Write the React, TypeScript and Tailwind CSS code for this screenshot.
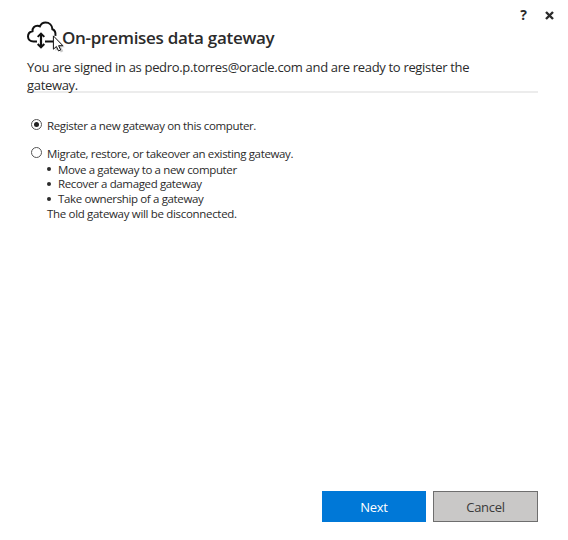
import React from "react";

function GatewayIcon() {
  return (
    <svg className="h-[32px] w-[38px] shrink-0" viewBox="0 0 38 32" fill="none">
      <g stroke="#111" strokeWidth="2">
        <path d="M10 20.500H6.600C3 20.500 1 18.300 1 15.600c0-2.800 2-4.800 4.500-5.300-.2-3.400 2-5.600 5-5.600 1 0 1.800.2 2.400.6C14 3 16.100 1.500 18.500 1.500c3.900 0 6.700 2.900 6.900 6.700 2.200.8 3.400 3.600 3 6.700" />
        <path d="M18 20.500H26" />
        <path d="M14 13v13" strokeWidth="2.200" />
        <path d="M10.700 15.900 14 12.600l3.300 3.300M10.700 23l3.300 3.300 3.300-3.300" />
      </g>
      <path d="M28.500 17v13l3-2.700 2.300 4.200 2.500-1.200-2.100-4.100h3.500z" fill="#777" opacity=".4" />
      <path
        d="M26.400 14.900v13.300l3-2.700 2.100 4.400 2.200-1-2.100-4.200h4.300z"
        fill="#fff"
        stroke="#111"
        strokeWidth="1"
      />
    </svg>
  );
}

function Option({ checked, label }: { checked?: boolean; label: string }) {
  return (
    <label className="flex h-[16px] items-center whitespace-nowrap">
      <span className="relative -top-px mr-[5px] flex h-[11px] w-[11px] items-center justify-center rounded-full border border-[#555] bg-white">
        {checked && <span className="h-[5px] w-[5px] rounded-full bg-[#222]" />}
      </span>
      <input type="radio" name="mode" defaultChecked={checked} className="sr-only" />
      <span>{label}</span>
    </label>
  );
}

const tasks = [
  "Move a gateway to a new computer",
  "Recover a damaged gateway",
  "Take ownership of a gateway",
];

export default function App() {
  return (
    <main className="flex h-[540px] w-[568px] flex-col bg-white font-['Open_Sans','Noto_Sans',sans-serif] text-[#2b2b2b]">
      <div className="flex h-[21px] items-end justify-end pr-[14px]">
        <button className="mr-[18px] h-[12px] text-[14px] font-bold leading-[12px]">?</button>
        <button aria-label="Close" className="mb-[1px]">
          <svg className="h-[9px] w-[9px]" viewBox="0 0 9 9" stroke="#2b2b2b" strokeWidth="2.4">
            <path d="M1 1l7 7M8 1L1 8" />
          </svg>
        </button>
      </div>
      <header className="ml-[27px] mr-[30px] flex h-[72px] flex-col border-b-2 border-[#ececec]">
        <div className="flex h-[37px] shrink-0">
          <GatewayIcon />
          <h1 className="-ml-[3px] pt-[5px] text-[17px] font-semibold leading-[24px] tracking-[-0.28px]">
            On-premises data gateway
          </h1>
        </div>
        <p className="text-[13px] leading-[18px] tracking-[-0.32px]">
          <span className="whitespace-nowrap">You are signed in as pedro.p.torres@oracle.com and are ready to register the</span>
          <br />
          gateway.
        </p>
      </header>
      <section className="ml-[31px] mt-[24px] flex-1 text-[11.5px] leading-[15px] tracking-[-0.36px]">
        <Option checked label="Register a new gateway on this computer." />
        <div className="mt-[12px]">
          <Option label="Migrate, restore, or takeover an existing gateway." />
        </div>
        <ul className="mt-px">
          {tasks.map((task) => (
            <li key={task} className="flex h-[14.67px] items-center whitespace-nowrap pl-[16px]">
              <span className="mr-[7px] h-[4px] w-[4px] rounded-full bg-[#2b2b2b]" />
              <span>{task}</span>
            </li>
          ))}
        </ul>
        <p className="pl-[16px] tracking-[-0.32px]">The old gateway will be disconnected.</p>
      </section>
      <footer className="mb-[18px] mr-[30px] flex justify-end gap-[7px] text-[13px] tracking-[-0.3px]">
        <button className="h-[31px] w-[104px] bg-[#0078d7] pt-[2px] text-white">Next</button>
        <button className="h-[31px] w-[105px] border border-[#6e6e6e] bg-[#c9c8c7] pt-[2px] text-[#3a3a3a]">Cancel</button>
      </footer>
    </main>
  );
}
